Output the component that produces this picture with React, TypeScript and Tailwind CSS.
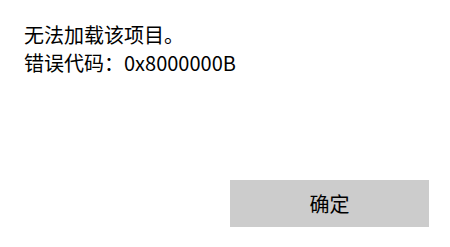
export default function App() {
  return (
    <div
      className="w-[450px] h-[247px] bg-white flex flex-col justify-between pl-6 pr-[21px] pt-[21px] pb-5 text-black"
      style={{ fontFamily: '"Noto Sans CJK SC", "Noto Sans", sans-serif' }}
    >
      <div className="text-[20px] leading-[28px]">
        <p>无法加载该项目。</p>
        <p>错误代码：0x8000000B</p>
      </div>
      <div className="flex justify-end">
        <button className="w-[199px] h-[47px] bg-[#cccccc] text-[20px] leading-none text-black">
          确定
        </button>
      </div>
    </div>
  );
}
